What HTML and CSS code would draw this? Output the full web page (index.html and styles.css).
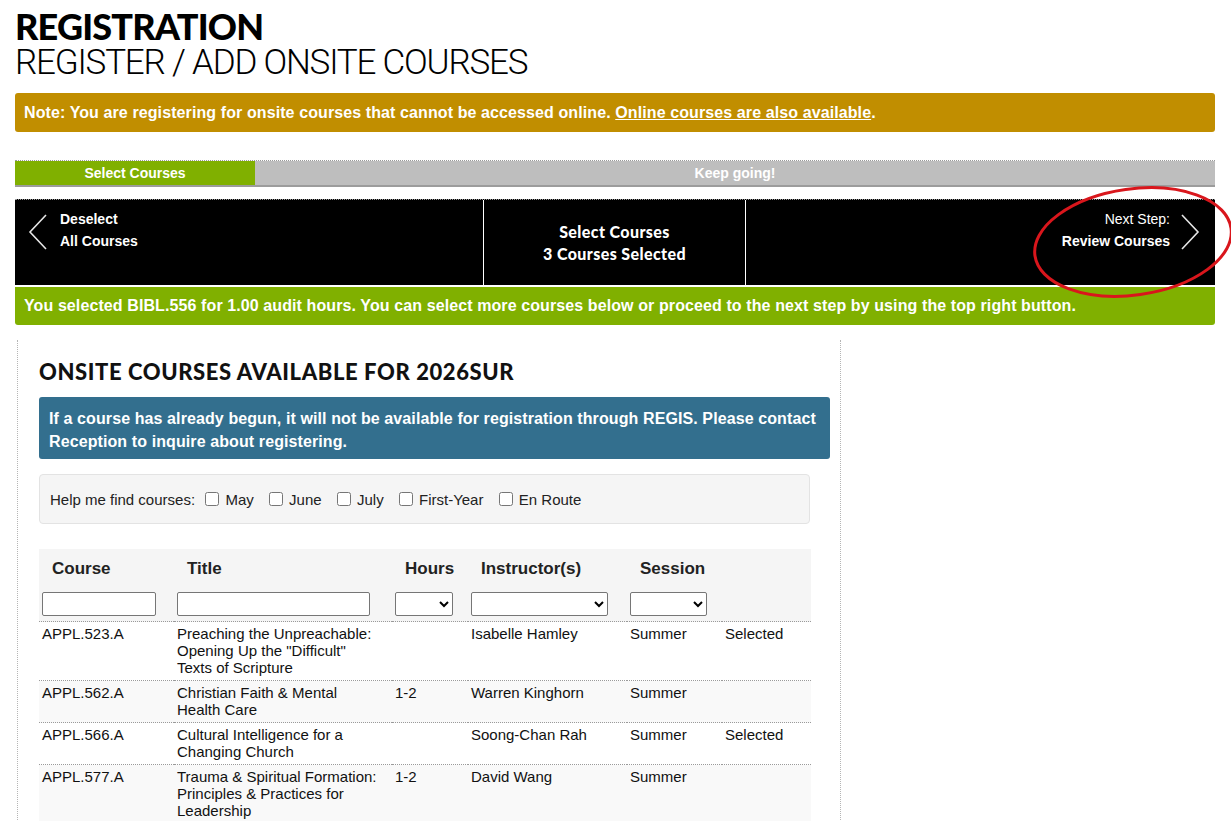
FILE: index.html
```html
<!DOCTYPE html>
<html lang="en">
<head>
    <meta charset="UTF-8">
    <meta name="viewport" content="width=device-width, initial-scale=1.0">
    <title>Registration - Register / Add Onsite Courses</title>
    <link rel="stylesheet" href="styles.css">
</head>
<body>
    <div class="page">
        <h1 class="title">REGISTRATION</h1>
        <h2 class="subtitle">REGISTER / ADD ONSITE COURSES</h2>

        <div class="note">
            Note: You are registering for onsite courses that cannot be accessed online. <a href="#">Online courses are also available</a>.
        </div>

        <div class="progress">
            <div class="progress-done">Select Courses</div>
            <div class="progress-rest">Keep going!</div>
        </div>

        <div class="stepbar">
            <a class="step step-prev" href="#">
                <svg class="chevron" width="20" height="36" viewBox="0 0 20 36">
                    <polyline points="18,1 2,18 18,35" fill="none" stroke="#e6e6e6" stroke-width="1.6"/>
                </svg>
                <span>Deselect<br>All Courses</span>
            </a>
            <div class="step step-current">
                <span>Select Courses<br>3 Courses Selected</span>
            </div>
            <a class="step step-next" href="#">
                <span><span class="light">Next Step:</span><br>Review Courses</span>
                <svg class="chevron" width="20" height="36" viewBox="0 0 20 36">
                    <polyline points="2,1 18,18 2,35" fill="none" stroke="#e6e6e6" stroke-width="1.6"/>
                </svg>
            </a>
        </div>

        <div class="message">
            You selected BIBL.556 for 1.00 audit hours. You can select more courses below or proceed to the next step by using the top right button.
        </div>

        <!-- annotation drawn over the next step button -->
        <svg class="annotation" width="226" height="130" viewBox="0 0 226 130">
            <ellipse cx="113" cy="64" rx="99" ry="53" transform="rotate(-8 113 64)" fill="none" stroke="#d9161c" stroke-width="3"/>
        </svg>

        <div class="courses">
            <h3 class="courses-heading">ONSITE COURSES AVAILABLE FOR 2026SUR</h3>

            <div class="info">
                If a course has already begun, it will not be available for registration through REGIS. Please contact Reception to inquire about registering.
            </div>

            <div class="finder">
                Help me find courses:
                <label><input type="checkbox"> May</label>
                <label><input type="checkbox"> June</label>
                <label><input type="checkbox"> July</label>
                <label><input type="checkbox"> First-Year</label>
                <label><input type="checkbox"> En Route</label>
            </div>

            <table class="course-table">
                <colgroup>
                    <col class="c-course">
                    <col class="c-title">
                    <col class="c-hours">
                    <col class="c-instructor">
                    <col class="c-session">
                    <col class="c-status">
                </colgroup>
                <thead>
                    <tr class="labels">
                        <th>Course</th>
                        <th>Title</th>
                        <th>Hours</th>
                        <th>Instructor(s)</th>
                        <th>Session</th>
                        <th></th>
                    </tr>
                    <tr class="filters">
                        <th><input type="text" class="f-course"></th>
                        <th><input type="text" class="f-title"></th>
                        <th><select class="f-hours"><option></option></select></th>
                        <th><select class="f-instructor"><option></option></select></th>
                        <th><select class="f-session"><option></option></select></th>
                        <th></th>
                    </tr>
                </thead>
                <tbody>
                    <tr>
                        <td>APPL.523.A</td>
                        <td class="t-title">Preaching the Unpreachable: Opening Up the "Difficult" Texts of Scripture</td>
                        <td></td>
                        <td>Isabelle Hamley</td>
                        <td>Summer</td>
                        <td>Selected</td>
                    </tr>
                    <tr>
                        <td>APPL.562.A</td>
                        <td class="t-title">Christian Faith &amp; Mental Health Care</td>
                        <td>1-2</td>
                        <td>Warren Kinghorn</td>
                        <td>Summer</td>
                        <td></td>
                    </tr>
                    <tr>
                        <td>APPL.566.A</td>
                        <td class="t-title">Cultural Intelligence for a Changing Church</td>
                        <td></td>
                        <td>Soong-Chan Rah</td>
                        <td>Summer</td>
                        <td>Selected</td>
                    </tr>
                    <tr>
                        <td>APPL.577.A</td>
                        <td class="t-title">Trauma &amp; Spiritual Formation: Principles &amp; Practices for Leadership</td>
                        <td>1-2</td>
                        <td>David Wang</td>
                        <td>Summer</td>
                        <td></td>
                    </tr>
                </tbody>
            </table>
        </div>
    </div>
</body>
</html>
```

FILE: styles.css
```css
body {
    margin: 0;
    background-color: white;
    color: #111;
    font-family: "Liberation Sans", Arial, sans-serif;
}
.page {
    position: relative;
    width: 1200px;
    margin-left: 15px;
}
.title {
    margin: 0;
    padding-top: 7px;
    font-family: Lato, sans-serif;
    font-weight: 900;
    font-size: 36px;
    line-height: 38px;
    letter-spacing: -0.8px;
    color: #000;
}
.subtitle {
    margin: 0;
    font-family: Roboto, sans-serif;
    font-weight: 300;
    font-size: 35px;
    line-height: 36px;
    letter-spacing: -1.2px;
    color: #000;
}
.note {
    margin-top: 12px;
    height: 39px;
    line-height: 39px;
    padding: 0 9px;
    background-color: #c18e00;
    border-radius: 3px;
    color: white;
    font-weight: bold;
    font-size: 16px;
    letter-spacing: 0.1px;
}
.note a {
    color: white;
    text-decoration: underline;
}
.progress {
    display: flex;
    margin-top: 28px;
    height: 24px;
    border-top: 1px dotted #9a9a9a;
    border-bottom: 2px solid #9c9c9c;
    color: white;
    font-weight: bold;
    font-size: 14px;
    line-height: 24px;
    text-align: center;
}
.progress-done {
    width: 240px;
    background-color: #80b000;
}
.progress-rest {
    flex: 1;
    background-color: #bebebe;
}
.stepbar {
    display: grid;
    grid-template-columns: 468px 263px 1fr;
    margin-top: 12px;
    height: 85px;
    border-top: 1px dotted #9a9a9a;
    background-color: black;
    color: white;
    font-size: 14px;
    font-weight: bold;
    line-height: 22px;
}
.step {
    display: flex;
    color: white;
    text-decoration: none;
}
.step-prev {
    align-items: flex-start;
    padding: 8px 0 0 13px;
    gap: 12px;
}
.step-prev .chevron {
    margin-top: 6px;
}
.step-current {
    align-items: center;
    justify-content: center;
    text-align: center;
    border-left: 1px solid white;
    border-right: 1px solid white;
    font-family: Lato, sans-serif;
    font-weight: 900;
    font-size: 16px;
    letter-spacing: 0.4px;
}
.step-next {
    justify-content: flex-end;
    align-items: flex-start;
    text-align: right;
    padding: 8px 15px 0 0;
    gap: 10px;
}
.step-next .chevron {
    margin-top: 6px;
}
.light {
    font-weight: normal;
}
.message {
    margin-top: 2px;
    height: 38px;
    line-height: 38px;
    padding: 0 9px;
    background-color: #80b000;
    border-radius: 0 0 3px 3px;
    color: white;
    font-weight: bold;
    font-size: 16px;
    letter-spacing: 0.1px;
}
.annotation {
    position: absolute;
    left: 1005px;
    top: 178px;
    overflow: visible;
    pointer-events: none;
}
.courses {
    width: 801px;
    margin: 15px 0 0 2px;
    padding: 0 0 0 21px;
    border-left: 1px dotted #b5b5b5;
    border-right: 1px dotted #b5b5b5;
}
.courses-heading {
    margin: 0;
    padding-top: 20px;
    font-family: Lato, sans-serif;
    font-weight: 900;
    font-size: 22px;
    line-height: 24px;
    letter-spacing: 0.6px;
    color: #111;
}
.info {
    margin-top: 13px;
    width: 771px;
    padding: 10px 10px 6px;
    background-color: #336f8e;
    border-radius: 3px;
    color: white;
    font-weight: bold;
    font-size: 16px;
    line-height: 23px;
    letter-spacing: 0.1px;
}
.finder {
    margin-top: 15px;
    width: 747px;
    height: 48px;
    padding: 0 12px 0 10px;
    background-color: #f5f5f5;
    border: 1px solid #e3e3e3;
    border-radius: 4px;
    font-size: 15px;
    line-height: 50px;
    color: #222;
}
.finder input {
    margin: 0 2px 0 6px;
    width: 14px;
    height: 14px;
    vertical-align: -1px;
}
.finder label + label {
    margin-left: 5px;
}
.course-table {
    margin-top: 25px;
    width: 772px;
    border-collapse: collapse;
    font-size: 15px;
    color: #111;
}
.c-course { width: 135px; }
.c-title { width: 218px; }
.c-hours { width: 76px; }
.c-instructor { width: 159px; }
.c-session { width: 95px; }
.c-status { width: 89px; }
.course-table thead {
    background-color: #f5f5f5;
}
.labels th {
    height: 40px;
    padding: 0 0 0 13px;
    text-align: left;
    font-size: 17px;
    font-weight: bold;
    color: #222;
    vertical-align: middle;
}
.filters th {
    height: 29px;
    padding: 3px 0 0 3px;
    text-align: left;
    vertical-align: top;
    border-bottom: 1px dotted #9a9a9a;
}
.filters input,
.filters select {
    box-sizing: border-box;
    height: 24px;
    border: 1px solid #767676;
    border-radius: 2px;
    background-color: white;
    font-size: 14px;
}
.f-course { width: 114px; }
.f-title { width: 193px; }
.f-hours { width: 58px; }
.f-instructor { width: 137px; }
.f-session { width: 77px; }
.course-table td {
    padding: 3px 3px 4px;
    vertical-align: top;
    line-height: 17px;
    border-bottom: 1px dotted #9a9a9a;
}
.course-table td.t-title {
    padding-right: 14px;
}
.course-table tbody tr:nth-child(even) {
    background-color: #f9f9f9;
}
```
